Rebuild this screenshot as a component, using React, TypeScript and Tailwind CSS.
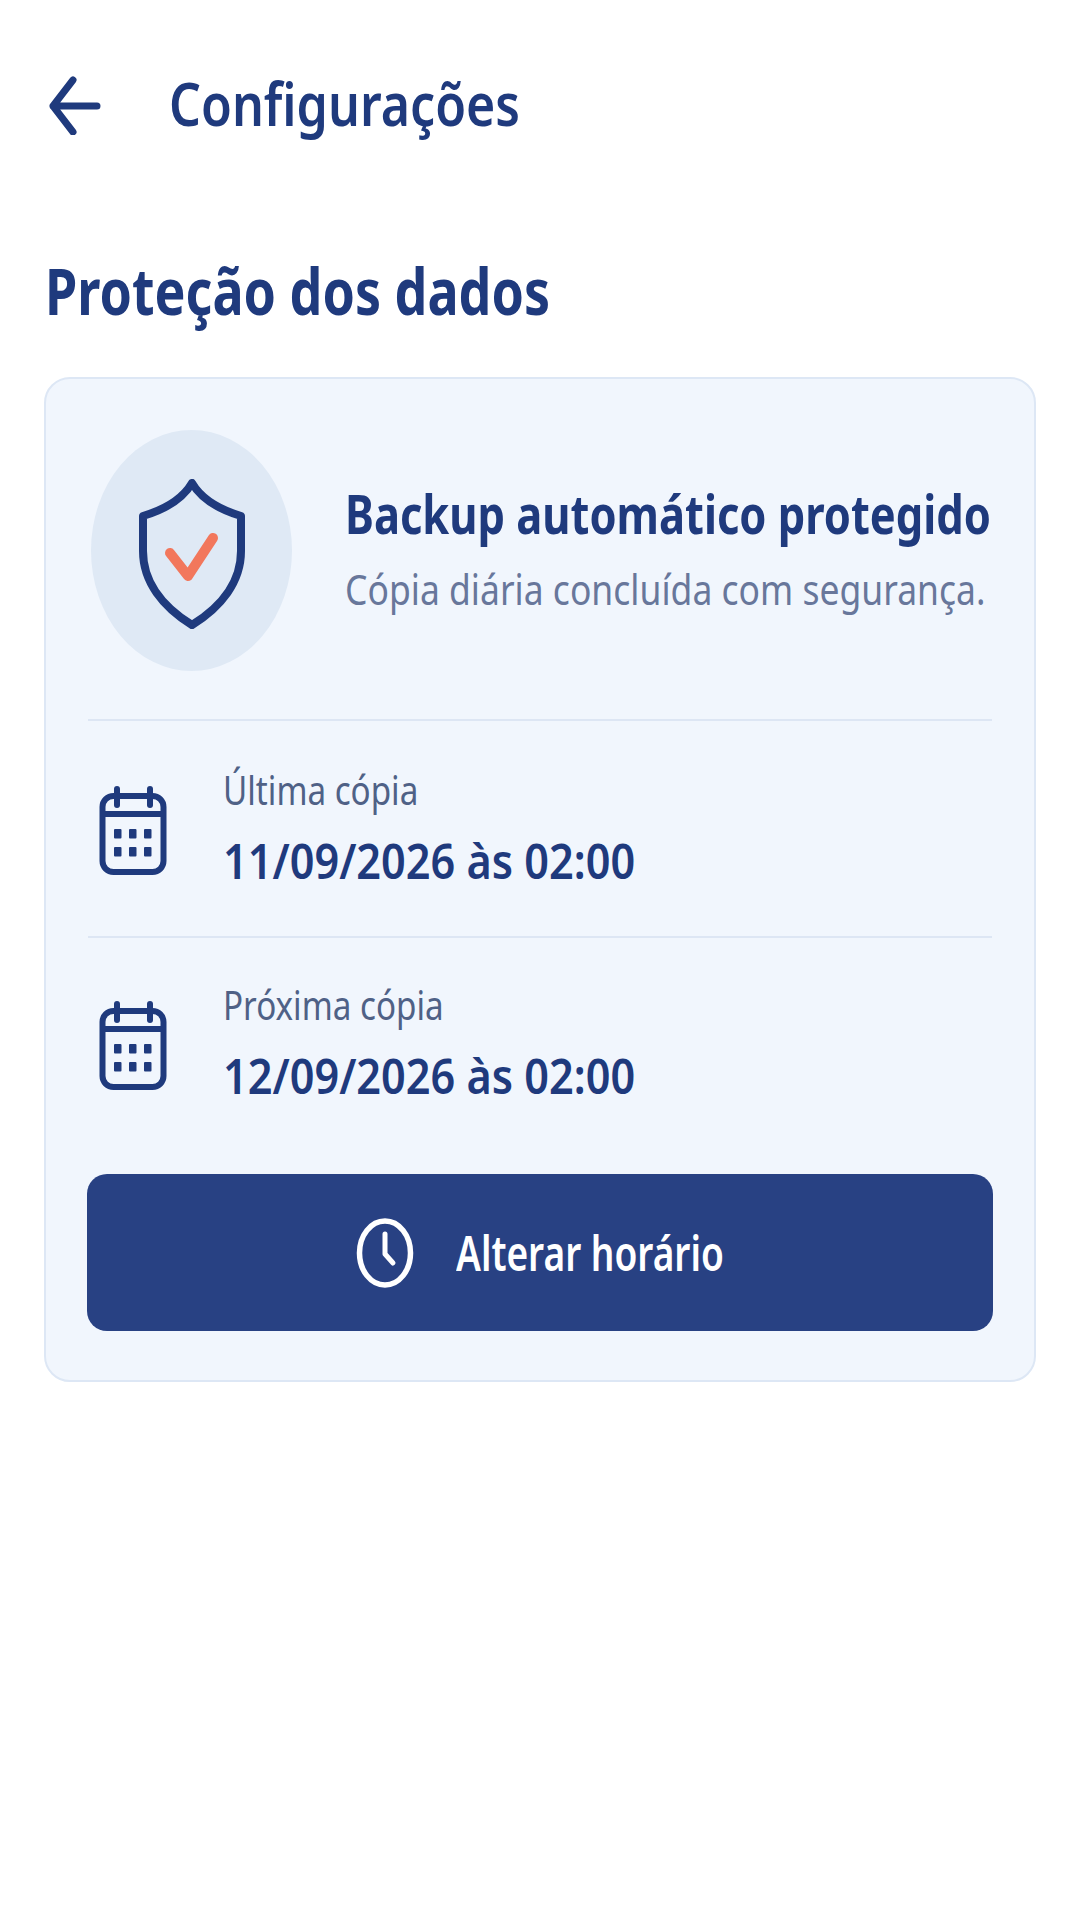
import React from "react";

const navy = "#1f3a7d";

function Calendar() {
  return (
    <svg width="68" height="90" viewBox="0 0 68 90" fill="none" className="shrink-0 mt-[5px]">
      <rect x="3.5" y="10" width="61" height="76" rx="11" stroke={navy} strokeWidth="6" />
      <line x1="3" y1="28" x2="65" y2="28" stroke={navy} strokeWidth="6" />
      <line x1="18" y1="3" x2="18" y2="19" stroke={navy} strokeWidth="6" strokeLinecap="round" />
      <line x1="51" y1="3" x2="51" y2="19" stroke={navy} strokeWidth="6" strokeLinecap="round" />
      {[15, 30, 45].map((x) =>
        [43, 61].map((y) => <rect key={x + "-" + y} x={x} y={y} width="7.5" height="9.5" rx="1" fill={navy} />)
      )}
    </svg>
  );
}

function Row({ label, value }: { label: string; value: string }) {
  return (
    <div className="flex items-center h-full pl-[11px]">
      <Calendar />
      <div className="ml-[56px] -mt-[3px] flex flex-col whitespace-nowrap">
        <span className="w-[220px] origin-left scale-x-[0.83] text-[40px] leading-[46px] text-[#4f6186]">{label}</span>
        <span className="w-[410px] mt-[20px] origin-left scale-x-[0.882] text-[49px] leading-[54px] font-semibold text-[#1f3a7d]">{value}</span>
      </div>
    </div>
  );
}

export default function App() {
  return (
    <div className="w-[1080px] h-[1920px] bg-white font-['Noto_Sans',sans-serif] overflow-hidden">
      <header className="flex items-center h-[105px] mt-[52px] pl-[49px]">
        <svg width="52" height="60" viewBox="0 0 52 60" fill="none">
          <path d="M24 5 L4 31 L24 57 M4 31 H48" stroke={navy} strokeWidth="7" strokeLinecap="round" strokeLinejoin="round" />
        </svg>
        <h1 className="w-[350px] ml-[68px] mb-[4px] origin-left scale-x-[0.835] whitespace-nowrap text-[60px] leading-[64px] font-semibold text-[#1f3a7d]">Configurações</h1>
      </header>
      <h2 className="w-[505px] ml-[45px] mt-[98px] origin-left scale-x-[0.80] whitespace-nowrap text-[65px] leading-[70px] font-bold text-[#1f3a7d]">Proteção dos dados</h2>
      <section className="mx-[44px] mt-[52px] h-[1005px] rounded-[26px] border-2 border-[#dde7f5] bg-[#f1f6fd] px-[42px] pt-[51px]">
        <div className="flex items-center pb-[48px] border-b-2 border-[#dde6f4]">
          <div className="ml-[3px] w-[201px] h-[241px] rounded-[50%] bg-[#dfe9f5] flex items-center justify-center shrink-0">
            <svg width="106" height="150" viewBox="0 0 106 150" fill="none" className="mt-[6px]">
              <path d="M53 4 C43 21 24 31 4 37 V72 C4 103 24 128 53 146 C82 128 102 103 102 72 V37 C82 31 63 21 53 4 Z" stroke={navy} strokeWidth="8" strokeLinejoin="round" />
              <path d="M31 74 L49 97 L74 59" stroke="#f2775c" strokeWidth="10" strokeLinecap="round" strokeLinejoin="round" />
            </svg>
          </div>
          <div className="ml-[53px] flex flex-col whitespace-nowrap">
            <span className="w-[645px] -mt-[4px] origin-left scale-x-[0.82] text-[53px] leading-[58px] font-bold text-[#1f3a7d]">Backup automático protegido</span>
            <span className="w-[640px] mt-[23px] origin-left scale-x-[0.845] text-[42px] leading-[46px] text-[#68779b]">Cópia diária concluída com segurança.</span>
          </div>
        </div>
        <div className="h-[217px] border-b-2 border-[#dde6f4]">
          <Row label="Última cópia" value="11/09/2026 às 02:00" />
        </div>
        <div className="h-[211px]">
          <Row label="Próxima cópia" value="12/09/2026 às 02:00" />
        </div>
        <button className="mt-[25px] mx-[-1px] w-[906px] h-[157px] rounded-[20px] bg-[#284183] flex items-center justify-center text-white">
          <svg width="60" height="72" viewBox="0 0 60 72" fill="none" className="mr-[41px] -ml-[2px]">
            <ellipse cx="30" cy="36" rx="25.5" ry="32" stroke="white" strokeWidth="5.5" />
            <path d="M30 17 V37 L38 46" stroke="white" strokeWidth="5" strokeLinecap="round" strokeLinejoin="round" />
          </svg>
          <span className="w-[268px] origin-left scale-x-[0.772] whitespace-nowrap text-left text-[48px] leading-[52px] font-semibold">Alterar horário</span>
        </button>
      </section>
    </div>
  );
}
